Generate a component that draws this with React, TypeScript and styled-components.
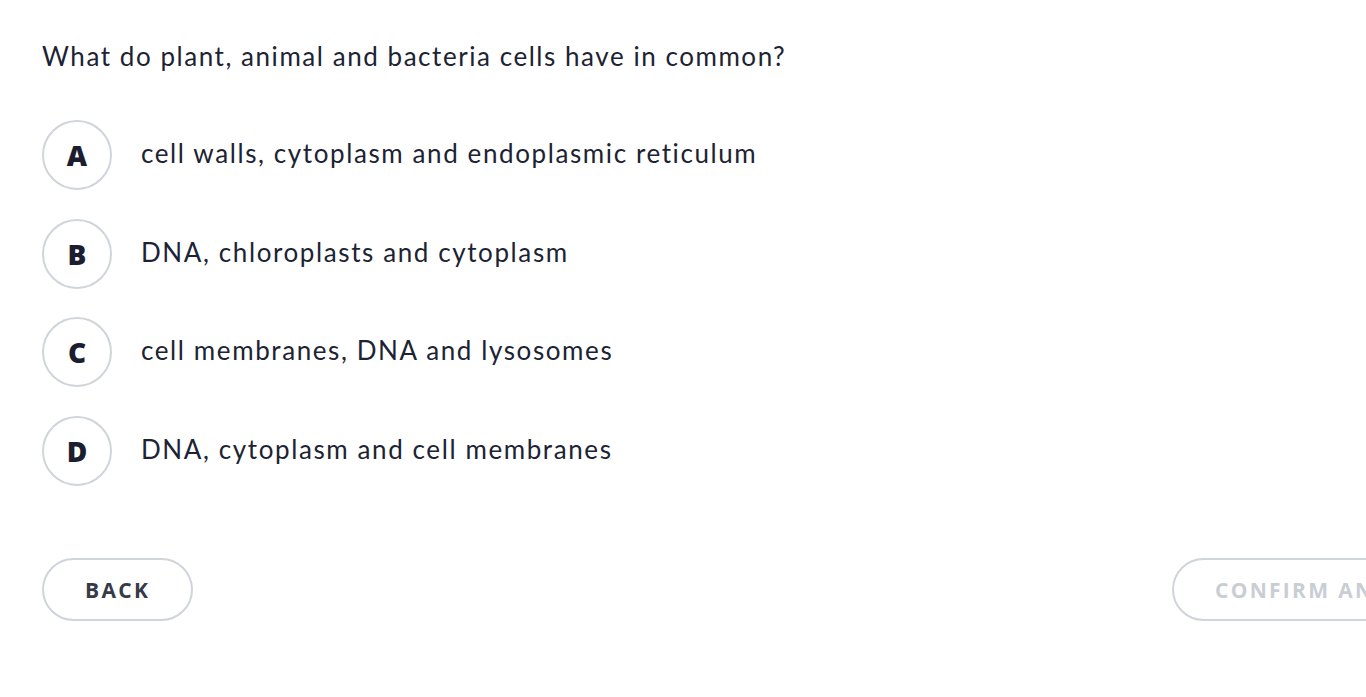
import React, { useState } from "react";
import styled, { createGlobalStyle } from "styled-components";

const GlobalStyle = createGlobalStyle`
  html, body {
    margin: 0;
    background: #ffffff;
    overflow: hidden;
  }
  body {
    font-family: Lato, "Noto Sans", sans-serif;
    color: #1c2333;
  }
`;

const Page = styled.div`
  width: 1442px;
  padding: 38px 0 0 42px;
  box-sizing: content-box;
`;

const Question = styled.h1`
  margin: 0 0 46px;
  font-size: 26px;
  font-weight: 400;
  line-height: 36px;
  letter-spacing: 1.55px;
  color: #1c2333;
`;

const Options = styled.ul`
  list-style: none;
  margin: 0;
  padding: 0;
  display: flex;
  flex-direction: column;
  gap: 28.7px;
`;

const Option = styled.li`
  display: flex;
  align-items: center;
  gap: 29px;
  cursor: pointer;
`;

const Letter = styled.span<{ $selected: boolean }>`
  width: 66px;
  height: 66px;
  border-radius: 50%;
  border: 2px solid ${(p) => (p.$selected ? "#1c2333" : "#d0d4db")};
  display: flex;
  align-items: center;
  justify-content: center;
  font-family: "Open Sans", sans-serif;
  font-weight: 800;
  font-size: 28px;
  color: #1c1d2e;
  flex-shrink: 0;
`;

const OptionText = styled.span`
  font-size: 26px;
  line-height: 36px;
  letter-spacing: 1.6px;
  margin-top: -4px;
`;

const Actions = styled.div`
  display: flex;
  justify-content: space-between;
  margin-top: 72px;
`;

const PillButton = styled.button<{ $disabled?: boolean }>`
  height: 63px;
  padding: 0 41px;
  border-radius: 32px;
  border: 2px solid #d0d4db;
  background: #ffffff;
  font-family: "Open Sans", sans-serif;
  font-weight: 700;
  font-size: 21px;
  letter-spacing: 2.3px;
  text-transform: uppercase;
  color: ${(p) => (p.$disabled ? "#c9cdd4" : "#363b47")};
  cursor: ${(p) => (p.$disabled ? "not-allowed" : "pointer")};
`;

const answers = [
  { key: "A", text: "cell walls, cytoplasm and endoplasmic reticulum" },
  { key: "B", text: "DNA, chloroplasts and cytoplasm" },
  { key: "C", text: "cell membranes, DNA and lysosomes" },
  { key: "D", text: "DNA, cytoplasm and cell membranes" },
];

const App: React.FC = () => {
  const [selected, setSelected] = useState<string | null>(null);

  return (
    <Page>
      <GlobalStyle />
      <Question>What do plant, animal and bacteria cells have in common?</Question>
      <Options>
        {answers.map((a) => (
          <Option key={a.key} onClick={() => setSelected(a.key)}>
            <Letter $selected={selected === a.key}>{a.key}</Letter>
            <OptionText>{a.text}</OptionText>
          </Option>
        ))}
      </Options>
      <Actions>
        <PillButton>Back</PillButton>
        <PillButton $disabled={!selected}>Confirm answer</PillButton>
      </Actions>
    </Page>
  );
};

export default App;
